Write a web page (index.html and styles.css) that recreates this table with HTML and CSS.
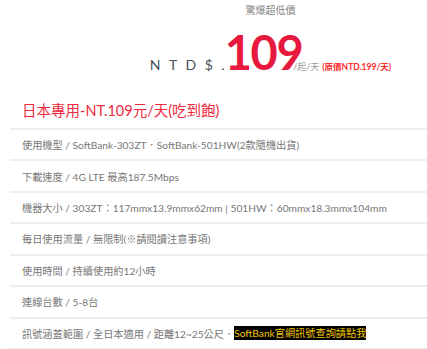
FILE: index.html
```html
<!DOCTYPE html>
<html lang="zh-Hant">
<head>
<meta charset="utf-8">
<link rel="stylesheet" href="styles.css">
</head>
<body>
<div class="hero">
  <div class="tagline">驚爆超低價</div>
  <div class="price">
    <span class="currency">NTD$.</span><span class="amount">109</span><span class="unit">/起/天</span><span class="orig">(原價NTD.199/天)</span>
  </div>
</div>
<h2 class="plan-title">日本專用-NT.109元/天(吃到飽)</h2>
<ul class="specs">
  <li>使用機型 / SoftBank-303ZT．SoftBank-501HW(2款隨機出貨)</li>
  <li>下載速度 / 4G LTE 最高187.5Mbps</li>
  <li>機器大小 / 303ZT：117mmx13.9mmx62mm | 501HW：60mmx18.3mmx104mm</li>
  <li>每日使用流量 / 無限制(※請閱讀注意事項)</li>
  <li>使用時間 / 持續使用約12小時</li>
  <li>連線台數 / 5-8台</li>
  <li>訊號涵蓋範圍 / 全日本適用 / 距離12~25公尺．<a class="hl">SoftBank官網訊號查詢請點我</a></li>
</ul>
</body>
</html>
```
FILE: styles.css
```css
html, body {
  margin: 0;
  padding: 0;
  background: #fff;
}
body {
  font-family: Lato, "Noto Sans CJK TC", sans-serif;
  color: #666;
  overflow: hidden;
}
.hero {
  padding-left: 114px;
  text-align: center;
}
.tagline {
  font-size: 10px;
  line-height: 21px;
  color: #888;
}
.price {
  margin-top: 8px;
  display: flex;
  justify-content: center;
  align-items: baseline;
  height: 47px;
}
.currency {
  font-size: 14px;
  letter-spacing: 8.4px;
  color: #4a4f5a;
  margin-right: -8px;
}
.amount {
  font-size: 47px;
  line-height: 1;
  font-weight: 700;
  color: #e8193f;
  letter-spacing: -1.5px;
}
.unit {
  font-size: 9px;
  color: #999;
  margin-left: -9px;
}
.orig {
  font-size: 8.5px;
  font-weight: 700;
  color: #ff2a2a;
  margin-left: 3px;
}
.plan-title {
  margin: 0 0 0 10px;
  padding: 25px 0 7px 12px;
  font-size: 14.5px;
  line-height: 20px;
  font-weight: 400;
  color: #f0283c;
  border-bottom: 2px solid #eeeeee;
}
.specs {
  list-style: none;
  margin: 0 0 0 10px;
  padding: 0;
}
.specs li {
  height: 29.43px;
  display: flex;
  align-items: center;
  padding-left: 12px;
  font-size: 10.2px;
  font-weight: 400;
  color: #777;
  border-bottom: 2px solid #eeeeee;
  white-space: nowrap;
}
.hl {
  background: #000;
  color: #f2c600;
  line-height: 14px;
}
```
